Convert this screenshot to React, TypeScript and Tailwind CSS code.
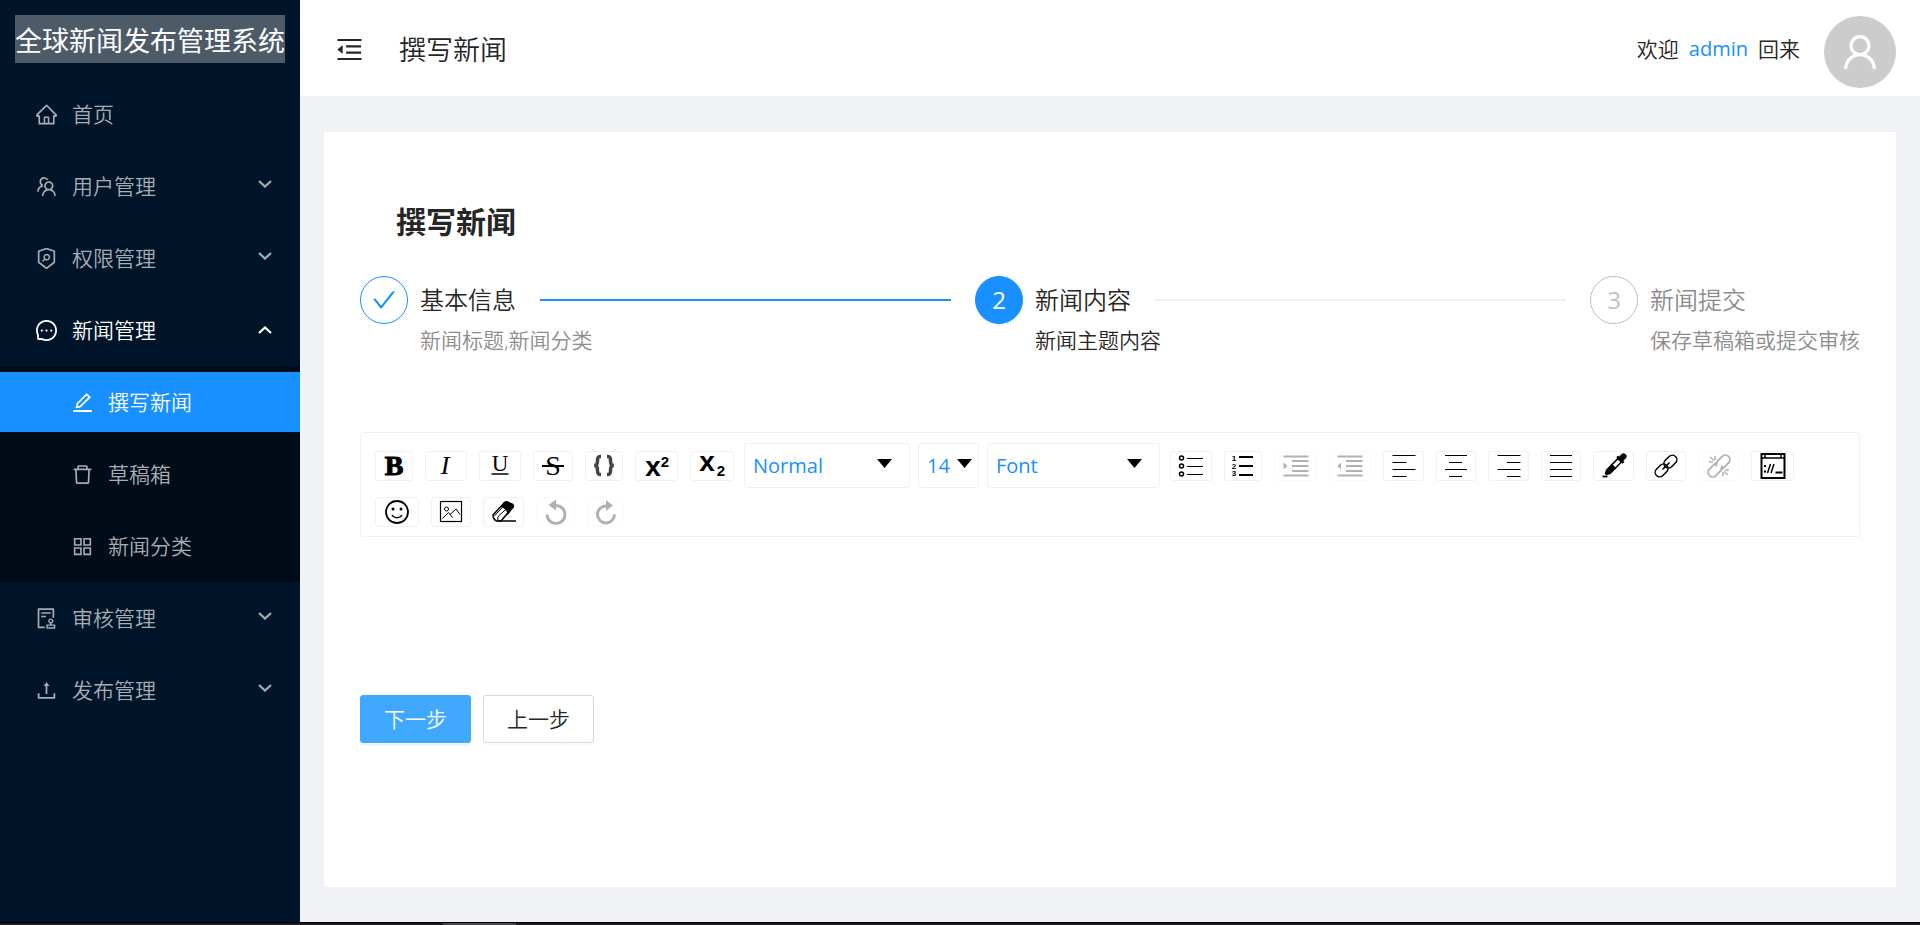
import type { ReactNode } from 'react'
import type { IconType } from 'react-icons'
import {
  AiOutlineAppstore,
  AiOutlineAudit,
  AiOutlineCheck,
  AiOutlineDelete,
  AiOutlineEdit,
  AiOutlineHome,
  AiOutlineMenuFold,
  AiOutlineMessage,
  AiOutlineSecurityScan,
  AiOutlineTeam,
  AiOutlineUpload,
  AiOutlineUser,
} from 'react-icons/ai'
import clsx from 'clsx'

interface MenuEntry {
  label: string
  icon: IconType
  children?: MenuEntry[]
  expandable?: boolean
  active?: boolean
}

const MENU: MenuEntry[] = [
  { label: '首页', icon: AiOutlineHome },
  { label: '用户管理', icon: AiOutlineTeam, expandable: true },
  { label: '权限管理', icon: AiOutlineSecurityScan, expandable: true },
  {
    label: '新闻管理',
    icon: AiOutlineMessage,
    expandable: true,
    children: [
      { label: '撰写新闻', icon: AiOutlineEdit, active: true },
      { label: '草稿箱', icon: AiOutlineDelete },
      { label: '新闻分类', icon: AiOutlineAppstore },
    ],
  },
  { label: '审核管理', icon: AiOutlineAudit, expandable: true },
  { label: '发布管理', icon: AiOutlineUpload, expandable: true },
]

// Ant icons carry a 64 unit margin, crop it so they fill their box
function Icon({ of: Glyph, className }: { of: IconType; className: string }) {
  return <Glyph viewBox="64 64 896 896" className={clsx('shrink-0', className)} />
}

function Arrow({ open }: { open: boolean }) {
  return (
    <svg
      viewBox="0 0 14 8"
      className={clsx('h-2 w-[14px] shrink-0', !open && 'mb-1')}
      fill="none"
      stroke="currentColor"
      strokeWidth="2.2"
      aria-hidden="true"
    >
      <path d={open ? 'M1 7l6-5.500L13 7' : 'M1 1l6 5.500L13 1'} />
    </svg>
  )
}

function MenuItem({ entry }: { entry: MenuEntry }) {
  const open = !!entry.children
  const rowClass = clsx(
    'flex h-[60px] w-full items-center gap-[15px] pl-9 pr-7 text-left',
    open ? 'text-white' : 'text-[#a6adb4]',
  )

  if (!entry.expandable) {
    return (
      <li className="py-[6px]">
        <a href="#" className={rowClass}>
          <Icon of={entry.icon} className="size-[21px]" />
          <span>{entry.label}</span>
        </a>
      </li>
    )
  }

  return (
    <li>
      <div className="py-[6px]">
        <button type="button" aria-expanded={open} className={rowClass}>
          <Icon of={entry.icon} className="size-[21px]" />
          <span className="flex-1">{entry.label}</span>
          <Arrow open={open} />
        </button>
      </div>
      {entry.children && (
        <ul className="bg-[#000c17]">
          {entry.children.map((child) => (
            <li key={child.label} className="py-[6px]">
              <a
                href="#"
                className={clsx(
                  'flex h-[60px] items-center gap-[15px] pl-[72px]',
                  child.active ? 'bg-[#1890ff] text-white' : 'text-[#a6adb4]',
                )}
              >
                <Icon of={child.icon} className="size-[21px]" />
                <span>{child.label}</span>
              </a>
            </li>
          ))}
        </ul>
      )}
    </li>
  )
}

function Sidebar() {
  return (
    <aside className="w-[300px] shrink-0 bg-[#001529]">
      <div className="m-[15px] h-12 whitespace-nowrap bg-white/30 text-[27px] font-normal leading-[52px] text-white">
        全球新闻发布管理系统
      </div>
      <nav>
        <ul>
          {MENU.map((entry) => (
            <MenuItem key={entry.label} entry={entry} />
          ))}
        </ul>
      </nav>
    </aside>
  )
}

function Header() {
  return (
    <header className="flex h-24 items-center bg-white pl-9 pr-6 pt-0.5">
      <button type="button" aria-label="收起菜单">
        <Icon of={AiOutlineMenuFold} className="size-[27px]" />
      </button>
      <span className="ml-9 text-[27px]">撰写新闻</span>
      <div className="ml-auto flex items-center gap-6">
        <span className="flex items-center gap-[10px]">
          欢迎 <span className="text-xl font-normal text-[#1890ff]">admin</span> 回来
        </span>
        <span className="mt-[6px] flex size-[72px] items-center justify-center rounded-full bg-[#ccc] text-white">
          <Icon of={AiOutlineUser} className="size-[38px]" />
        </span>
      </div>
    </header>
  )
}

interface StepProps {
  status: 'finish' | 'process' | 'wait'
  index: number
  title: string
  description: string
  last?: boolean
}

function Step({ status, index, title, description, last }: StepProps) {
  return (
    <li className={clsx('flex items-start gap-3', !last && 'flex-1')}>
      <span
        className={clsx(
          'flex size-12 shrink-0 items-center justify-center rounded-full border text-2xl font-normal',
          status === 'finish' && 'border-[#1890ff] text-[#1890ff]',
          status === 'process' && 'border-[#1890ff] bg-[#1890ff] text-white',
          status === 'wait' && 'border-[#bfbfbf] text-[#bfbfbf]',
        )}
      >
        {status === 'finish' ? <Icon of={AiOutlineCheck} className="size-6" /> : index}
      </span>
      <div className={clsx(!last && 'flex-1')}>
        <div className="flex items-center gap-6">
          <span className={clsx('text-2xl leading-[48px]', status === 'wait' && 'text-[#8c8c8c]')}>{title}</span>
          {!last && <span className={clsx('h-0.5 flex-1', status === 'finish' ? 'bg-[#1890ff]' : 'bg-[#f0f0f0]')} />}
        </div>
        <div className={clsx('leading-[33px]', status !== 'process' && 'text-[#8c8c8c]')}>{description}</div>
      </div>
    </li>
  )
}

/* Toolbar icons share a 28px box with the origin in its centre */
function Glyph({ children }: { children: ReactNode }) {
  return (
    <svg
      viewBox="-14 -14 28 28"
      className="size-7 shrink-0 overflow-visible"
      fill="none"
      stroke="black"
      strokeWidth="1.5"
      aria-hidden="true"
    >
      {children}
    </svg>
  )
}

interface LetterProps {
  x: number
  y: number
  className: string
  children: string
}

function Letter({ x, y, className, children }: LetterProps) {
  return (
    <text x={x} y={y} textAnchor="middle" fill="black" stroke="none" className={className}>
      {children}
    </text>
  )
}

const serif = "font-['Liberation_Serif',serif]"
const sans = "font-['Liberation_Sans',sans-serif]"

interface Tool {
  name: string
  width: string
  icon: ReactNode
  disabled?: boolean
}

const INLINE_TOOLS: Tool[] = [
  {
    name: '粗体',
    width: 'w-[38px]',
    icon: <Letter x={0} y={9} className={clsx(serif, 'stroke-black stroke-1 text-[28px] font-bold')}>B</Letter>,
  },
  {
    name: '斜体',
    width: 'w-[42px]',
    icon: <Letter x={-1} y={8} className={clsx(serif, 'text-[26px] italic')}>I</Letter>,
  },
  {
    name: '下划线',
    width: 'w-[42px]',
    icon: (
      <>
        <Letter x={0} y={5} className={clsx(serif, 'text-[23px]')}>U</Letter>
        <path d="M-8.500 8h17" />
      </>
    ),
  },
  {
    name: '删除线',
    width: 'w-[40px]',
    icon: (
      <>
        <Letter x={0} y={9} className={clsx(serif, 'text-[28px]')}>S</Letter>
        <path d="M-11 0h22" strokeWidth="2" />
      </>
    ),
  },
  {
    name: '等宽',
    width: 'w-[38px]',
    icon: (
      <g stroke="#444" strokeWidth="3.500">
        <path d="M-3-9.500c-3 0-3.500 1-3.500 3.500 0 4-.5 5-3 5.500 2.500.5 3 1.500 3 5.500 0 2.500.5 3.500 3.500 3.500" />
        <path d="M3-9.500c3 0 3.500 1 3.500 3.500 0 4 .5 5 3 5.500-2.500.5-3 1.500-3 5.500 0 2.500-.5 3.500-3.500 3.500" />
      </g>
    ),
  },
  {
    name: '上标',
    width: 'w-[43px]',
    icon: (
      <>
        <Letter x={-4} y={10} className={clsx(sans, 'text-[28px] font-bold')}>x</Letter>
        <Letter x={8} y={1} className={clsx(sans, 'text-[15px] font-bold')}>2</Letter>
      </>
    ),
  },
  {
    name: '下标',
    width: 'w-[44px]',
    icon: (
      <>
        <Letter x={-5} y={5} className={clsx(sans, 'text-[28px] font-bold')}>x</Letter>
        <Letter x={9} y={10} className={clsx(sans, 'text-[15px] font-bold')}>2</Letter>
      </>
    ),
  },
]

const indentLines = 'M-12.500-9.500h25M-4-5h16.500M-4 0h16.500M-4 5h16.500M-12.500 9.500h25'

// two chain rings along the diagonal
const chain = (
  <g transform="rotate(-45)">
    <rect x="-13.500" y="-4.500" width="14.500" height="9" rx="4.500" />
    <rect x="-1" y="-4.500" width="14.500" height="9" rx="4.500" />
    <path d="M-5 0h10" />
  </g>
)

const BLOCK_TOOLS: Tool[] = [
  {
    name: '无序列表',
    width: 'w-[42px]',
    icon: (
      <>
        <circle cx="-9.500" cy="-8" r="2" />
        <circle cx="-9.500" cy="0" r="2" />
        <circle cx="-9.500" cy="8" r="2" />
        <path d="M-4-7.500h16M-4 .5h16M-4 8.500h16" strokeWidth="1.2" />
      </>
    ),
  },
  {
    name: '有序列表',
    width: 'w-[38px]',
    icon: (
      <>
        <Letter x={-9} y={-5} className={clsx(sans, 'text-[8px] font-bold')}>1</Letter>
        <Letter x={-9} y={3} className={clsx(sans, 'text-[8px] font-bold')}>2</Letter>
        <Letter x={-9} y={10} className={clsx(sans, 'text-[8px] font-bold')}>3</Letter>
        <path d="M-4-9h14M-4 0h14M-4 9h14" strokeWidth="2" />
      </>
    ),
  },
  {
    name: '增加缩进',
    width: 'w-[43px]',
    disabled: true,
    icon: (
      <>
        <path d={indentLines} strokeWidth="2" />
        <path d="M-12.500-3.500l4 3.500-4 3.500z" fill="black" stroke="none" />
      </>
    ),
  },
  {
    name: '减少缩进',
    width: 'w-[42px]',
    disabled: true,
    icon: (
      <>
        <path d={indentLines} strokeWidth="2" />
        <path d="M-9-3.500l-3.500 3.500 3.500 3.500z" fill="black" stroke="none" />
      </>
    ),
  },
  {
    name: '左对齐',
    width: 'w-[41px]',
    icon: <path d="M-11.500-10.500h23M-11.500-3.500h14M-11.500 3.500h23M-11.500 10.500h14" strokeWidth="1.2" />,
  },
  {
    name: '居中',
    width: 'w-[40px]',
    icon: <path d="M-11-10.500h22M-7-3.500h13M-11 3.500h22M-7 10.500h13" strokeWidth="1.2" />,
  },
  {
    name: '右对齐',
    width: 'w-[41px]',
    icon: <path d="M-11.500-10.500h23M-2-3.500h13.500M-11.500 3.500h23M-2 10.500h13.500" strokeWidth="1.2" />,
  },
  {
    name: '两端对齐',
    width: 'w-[40px]',
    icon: <path d="M-11-10.500h22M-11-3.500h22M-11 3.500h22M-11 10.500h22" strokeWidth="1.2" />,
  },
  {
    name: '颜色',
    width: 'w-[41px]',
    icon: (
      <>
        <g transform="rotate(45)">
          <path d="M-3-13.500a3 3 0 0 1 6 0v5h-6z" fill="black" stroke="none" />
          <path d="M-4.500-9h9" strokeWidth="2.500" />
          <path d="M-2.500-8v9h5v-9z" />
          <path d="M-3.200 0h6.400v8l-2 4h-2.400l-2-4z" fill="black" stroke="none" />
        </g>
        <path d="M-11.500 10.500h5" strokeWidth="1.8" />
      </>
    ),
  },
  { name: '链接', width: 'w-[40px]', icon: chain },
  {
    name: '取消链接',
    width: 'w-[41px]',
    disabled: true,
    icon: (
      <>
        <g transform="rotate(-45)" strokeWidth="1.8">
          <path d="M2 1.500a4.500 4.500 0 0 1-4 3h-7a4.500 4.500 0 0 1 0-9h7a4.500 4.500 0 0 1 3 1.500" />
          <path d="M-2-1.500a4.500 4.500 0 0 1 4-3h7a4.500 4.500 0 0 1 0 9h-7a4.500 4.500 0 0 1-3-1.500" />
        </g>
        <path d="M-4-10v4M-9-9l4 3.500M-10-4h4M4 10V6M9 9l-4-3.500M10 4h-4" />
      </>
    ),
  },
  {
    name: '嵌入',
    width: 'w-[43px]',
    icon: (
      <>
        <rect x="-11.500" y="-12" width="23" height="24" strokeWidth="2" />
        <path d="M-11.500-8h23M-8-12v4M8-12v4" />
        <path d="M-8-1v2M-8 4.500v2" strokeWidth="2" />
        <path d="M-5.500 7l3-9M-2 7l3-9" />
        <path d="M2.500 6.500h7" strokeWidth="2" />
      </>
    ),
  },
  {
    name: '表情',
    width: 'w-[44px]',
    icon: (
      <>
        <circle r="11" strokeWidth="1.8" />
        <circle cx="-4" cy="-3" r="1.500" fill="black" stroke="none" />
        <circle cx="4" cy="-3" r="1.500" fill="black" stroke="none" />
        <path d="M-5 3c2 3.500 8 3.500 10 0" />
      </>
    ),
  },
  {
    name: '图片',
    width: 'w-[40px]',
    icon: (
      <>
        <rect x="-10.500" y="-10.500" width="21" height="20" strokeWidth="1.200" />
        <circle cx="-4.500" cy="-3" r="2" strokeWidth="1" />
        <path d="M-8.500 6.500l6-6 4 5M-1 2.500l6-5.500 4 5.500" strokeWidth="1" />
      </>
    ),
  },
  {
    name: '清除格式',
    width: 'w-[41px]',
    icon: (
      <>
        <path d="M-11 3L.5-9.500q1-.8 2.500-.5l5.500 2.500q1.500 1 .5 2.500L-3 9h-4.500q-3.500-2-3.500-6z" />
        <path d="M-9.500 4L1-7.500M-6 8.500q-1-3 1-5L4-4.500" strokeWidth="1" />
        <path d="M.5-9.500q1-.8 2.500-.5l5.500 2.500q1.500 1 .5 2.500L4 1.500Q3.500-3-2-5.500z" fill="black" />
        <path d="M-6 9h18" />
      </>
    ),
  },
  {
    name: '撤销',
    width: 'w-[39px]',
    disabled: true,
    icon: (
      <>
        <path d="M-9 2.500a9 9 0 1 0 9-9h-1" strokeWidth="3" />
        <path d="M0-12.500v11l-7.500-5.500z" fill="black" stroke="none" />
      </>
    ),
  },
  {
    name: '重做',
    width: 'w-[37px]',
    disabled: true,
    icon: (
      <>
        <path d="M8.500 2.500a8.500 8.500 0 1 1-8.500-8.500h1" strokeWidth="3" />
        <path d="M0-12v11l7-5.500z" fill="black" stroke="none" />
      </>
    ),
  },
]

function ToolButton({ tool }: { tool: Tool }) {
  return (
    <button
      type="button"
      aria-label={tool.name}
      disabled={tool.disabled}
      className={clsx(
        'mx-[6px] flex h-[30px] items-center justify-center rounded-[3px] border border-[#f1f1f1] disabled:opacity-30',
        tool.width,
      )}
    >
      <Glyph>{tool.icon}</Glyph>
    </button>
  )
}

interface ToolSelectProps {
  label: string
  value: string
  width: string
  caret: string
}

function ToolSelect({ label, value, width, caret }: ToolSelectProps) {
  return (
    <div className={clsx('relative mx-1', width)}>
      <select
        aria-label={label}
        className="h-[45px] w-full appearance-none rounded-[3px] border border-[#f1f1f1] bg-white pl-2 text-xl font-normal text-[#1890ff]"
      >
        <option>{value}</option>
      </select>
      <svg viewBox="0 0 15 9" className={clsx('pointer-events-none absolute top-4 h-[9px] w-[15px]', caret)}>
        <path d="M0 0h15L7.500 9z" />
      </svg>
    </div>
  )
}

function Editor() {
  return (
    <div className="mt-[75px]">
      <div className="flex flex-wrap items-center gap-y-[9px] rounded-[3px] border border-[#f1f1f1] pb-[9px] pl-2 pr-2 pt-[10px]">
        {INLINE_TOOLS.map((tool) => (
          <ToolButton key={tool.name} tool={tool} />
        ))}
        <ToolSelect label="段落格式" value="Normal" width="w-[166px]" caret="right-[18px]" />
        <ToolSelect label="字号" value="14" width="w-[61px]" caret="right-[7px]" />
        <ToolSelect label="字体" value="Font" width="w-[173px]" caret="right-[18px]" />
        {BLOCK_TOOLS.map((tool) => (
          <ToolButton key={tool.name} tool={tool} />
        ))}
      </div>
      <div contentEditable suppressContentEditableWarning role="textbox" aria-label="新闻内容" className="h-[158px]" />
    </div>
  )
}

export default function App() {
  return (
    <div className="flex min-h-screen flex-col font-['Open_Sans','Noto_Sans_CJK_SC',sans-serif] text-[21px] font-[350] leading-[33px] text-[#262626]">
      <div className="flex flex-1">
        <Sidebar />
        <div className="flex min-w-0 flex-1 flex-col bg-[#f0f2f5]">
          <Header />
          <main className="mx-6 mb-[35px] mt-9 flex-1 bg-white p-9">
            <h1 className="px-9 py-[30px] text-[30px] font-bold leading-[48px]">撰写新闻</h1>
            <ol className="flex gap-6">
              <Step status="finish" index={1} title="基本信息" description="新闻标题,新闻分类" />
              <Step status="process" index={2} title="新闻内容" description="新闻主题内容" />
              <Step status="wait" index={3} title="新闻提交" description="保存草稿箱或提交审核" last />
            </ol>
            <Editor />
            <div className="flex gap-3">
              <button
                type="button"
                className="h-12 rounded-[3px] border border-[#40a9ff] bg-[#40a9ff] px-[23px] text-white shadow-[0_3px_0_rgba(0,0,0,0.045)]"
              >
                下一步
              </button>
              <button
                type="button"
                className="h-12 rounded-[3px] border border-[#d9d9d9] bg-white px-[23px] shadow-[0_3px_0_rgba(0,0,0,0.015)]"
              >
                上一步
              </button>
            </div>
          </main>
        </div>
      </div>
      <footer className="flex h-[3px] border-t border-black bg-[#1c1a1a] pl-[443px]">
        <span className="w-[73px] bg-[#4a4848]" />
      </footer>
    </div>
  )
}
